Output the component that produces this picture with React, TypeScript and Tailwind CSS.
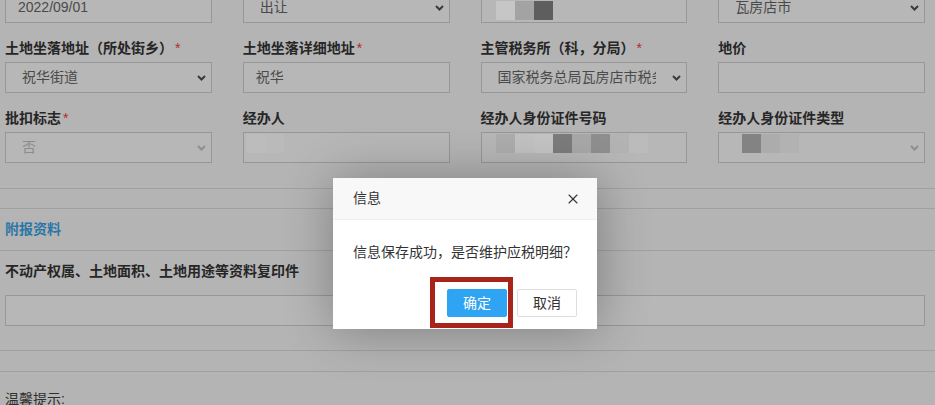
import { X } from 'lucide-react';

type Field = {
  label: string;
  required?: boolean;
  kind: 'input' | 'select';
  value?: string;
  disabled?: boolean;
  mosaic?: string[];
  mosaicClass?: string;
};

// page is shown behind a layer dialog, so everything here is already in the dimmed tones
const rows: Field[][] = [
  [
    { label: '土地权属转移日期', required: true, kind: 'input', value: '2022/09/01' },
    { label: '土地权属转移方式', required: true, kind: 'select', value: '出让' },
    {
      label: '纳税人名称',
      kind: 'input',
      mosaic: ['#c6c6c6', '#a3a3a3', '#5e5e5e'],
      mosaicClass: 'mt-[8px] ml-[14px]',
    },
    { label: '土地坐落地址（行政区划）', required: true, kind: 'select', value: '瓦房店市' },
  ],
  [
    { label: '土地坐落地址（所处街乡）', required: true, kind: 'select', value: '祝华街道' },
    { label: '土地坐落详细地址', required: true, kind: 'input', value: '祝华' },
    {
      label: '主管税务所（科，分局）',
      required: true,
      kind: 'select',
      value: '国家税务总局瓦房店市税务局祝华税务所',
    },
    { label: '地价', kind: 'input' },
  ],
  [
    { label: '批扣标志', required: true, kind: 'select', value: '否', disabled: true },
    {
      label: '经办人',
      kind: 'input',
      mosaic: ['#bcbcbc', '#bababa'],
      mosaicClass: 'mt-[1px] ml-[2px]',
    },
    {
      label: '经办人身份证件号码',
      kind: 'input',
      mosaic: ['#adadad', '#c2c2c2', '#c4c4c4', '#7c7c7c', '#a8a8a8', '#8f8f8f', '#b3b3b3', '#bbbbbb'],
      mosaicClass: 'mt-[1px] ml-[14px]',
    },
    {
      label: '经办人身份证件类型',
      kind: 'select',
      disabled: true,
      mosaic: ['#838383', '#acacac', '#b2b2b2'],
      mosaicClass: 'mt-[1px] ml-[23px]',
    },
  ],
];

const Chevron = ({ muted }: { muted?: boolean }) => (
  <svg width="9" height="6" viewBox="0 0 9 6" className="ml-[16px] mr-[5px] shrink-0">
    <polyline
      points="1,1 4.5,4.5 8,1"
      fill="none"
      stroke={muted ? '#8e8e8e' : '#3a3a3a'}
      strokeWidth="2"
    />
  </svg>
);

const FormField = ({ field }: { field: Field }) => {
  const isSelect = field.kind === 'select';
  return (
    <div className="flex min-w-0 flex-col gap-[4px]">
      <div className="h-[20px] whitespace-nowrap font-bold leading-[20px] text-[#262626]">
        {field.label}
        {field.required && <span className="ml-[2px] font-normal text-[#b32a2a]">*</span>}
      </div>
      <div className="flex h-[31px] items-center border border-[#979797] bg-[#b7b7b7]">
        {field.mosaic ? (
          <div className={`flex flex-1 self-start ${field.mosaicClass}`}>
            {field.mosaic.map((c, i) => (
              <span key={i} className="h-[19px] w-[19px]" style={{ backgroundColor: c }} />
            ))}
          </div>
        ) : (
          <div
            className={`flex-1 overflow-hidden whitespace-nowrap ${isSelect ? 'pl-[16px]' : 'pl-[12px]'} ${
              field.disabled ? 'text-[#8c8c8c]' : 'text-[#4a4a4a]'
            }`}
          >
            {field.value}
          </div>
        )}
        {isSelect && <Chevron muted={field.disabled} />}
      </div>
    </div>
  );
};

const App = () => {
  return (
    <div className="relative h-screen overflow-hidden bg-[#b4b4b4] text-[14px] [font-family:'Liberation_Sans','Noto_Sans_CJK_SC',sans-serif]">
      <div className="-mt-[32px] grid grid-cols-4 gap-x-[31px] gap-y-[15px] pl-[5px] pr-[10px]">
        {rows.flat().map((f, i) => (
          <FormField key={i} field={f} />
        ))}
      </div>

      <div className="mt-[25px] border-t border-[#a0a0a0]" />
      <div className="mt-[19px] flex h-[43px] items-center border-y border-[#a0a0a0] px-[5px] font-bold text-[#2a77a7]">
        附报资料
      </div>

      <div className="pl-[5px] pr-[10px]">
        <div className="mt-[10px] h-[20px] font-bold leading-[20px] text-[#262626]">
          不动产权属、土地面积、土地用途等资料复印件
        </div>
        <div className="mt-[14px] h-[31px] border border-[#979797] bg-[#b7b7b7]" />
      </div>

      <div className="mt-[24px] border-t border-[#a0a0a0]" />
      <div className="mt-[20px] border-t border-[#a0a0a0]" />
      <div className="mt-[17px] px-[5px] leading-[20px] text-[#2f2f2f]">温馨提示:</div>

      {/* layer dialog */}
      <div className="absolute left-[333px] top-[178px] w-[264px] bg-white shadow-[1px_1px_50px_rgba(0,0,0,0.3)]">
        <div className="flex h-[42px] items-center justify-between border-b border-[#eeeeee] bg-[#f8f8f8] pl-[20px] pr-[16px] text-[#333]">
          <span>信息</span>
          <X size={16} strokeWidth={1.6} className="text-[#333]" />
        </div>
        <div className="p-[20px] leading-[24px] text-[#333]">信息保存成功，是否维护应税明细？</div>
        <div className="flex justify-end px-[15px] pb-[12px]">
          <button className="mx-[5px] mt-[5px] h-[28px] w-[60px] rounded-[2px] border border-[#2fa4f3] bg-[#2fa4f3] text-white">
            确定
          </button>
          <button className="mx-[5px] mt-[5px] h-[28px] w-[60px] rounded-[2px] border border-[#dedede] bg-white text-[#333]">
            取消
          </button>
        </div>
        <div className="absolute left-[97px] top-[99px] h-[51px] w-[83px] border-[5px] border-[#a8241a]" />
      </div>
    </div>
  );
};

export default App;
